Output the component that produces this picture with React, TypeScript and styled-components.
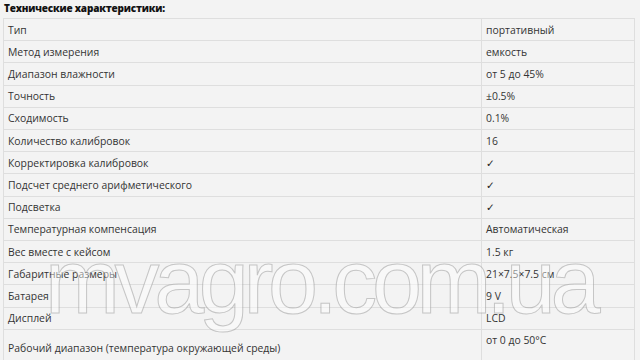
import styled, { createGlobalStyle } from 'styled-components';

const GlobalStyle = createGlobalStyle`
  html, body {
    margin: 0;
    padding: 0;
    background: #f3f3f3;
    overflow: hidden;
  }
  body {
    font-family: "Open Sans", "Noto Sans", sans-serif;
    color: #333;
  }
`;

interface Spec {
  name: string;
  value: string;
  tall?: boolean;
}

const specs: Spec[] = [
  { name: 'Тип', value: 'портативный' },
  { name: 'Метод измерения', value: 'емкость' },
  { name: 'Диапазон влажности', value: 'от 5 до 45%' },
  { name: 'Точность', value: '±0.5%' },
  { name: 'Сходимость', value: '0.1%' },
  { name: 'Количество калибровок', value: '16' },
  { name: 'Корректировка калибровок', value: '✓' },
  { name: 'Подсчет среднего арифметического', value: '✓' },
  { name: 'Подсветка', value: '✓' },
  { name: 'Температурная компенсация', value: 'Автоматическая' },
  { name: 'Вес вместе с кейсом', value: '1.5 кг' },
  { name: 'Габаритные размеры', value: '21×7.5×7.5 см' },
  { name: 'Батарея', value: '9 V' },
  { name: 'Дисплей', value: 'LCD' },
  { name: 'Рабочий диапазон (температура окружающей среды)', value: 'от 0 до 50°C', tall: true },
];

const S = {
  Page: styled.div`
    position: relative;
    padding: 0 5px 0 3px;
  `,
  Title: styled.div`
    font-size: 10px;
    font-weight: 800;
    letter-spacing: -0.2px;
    line-height: 16px;
    color: #111;
    padding-left: 1px;
    margin-bottom: 2px;
  `,
  Table: styled.table`
    width: 100%;
    border-collapse: collapse;
    font-size: 10.4px;
    line-height: 16.2px;
  `,
  Row: styled.tr`
    height: 22.2px;
  `,
  Cell: styled.td<{ $first?: boolean }>`
    border: 1px solid #dedede;
    padding: 2.5px 4px;
    vertical-align: middle;
    width: ${({ $first }) => ($first ? '469px' : 'auto')};
  `,
  Check: styled.span`
    display: inline-block;
    font-family: "DejaVu Sans", sans-serif;
    font-size: 10.5px;
    line-height: 10px;
    vertical-align: baseline;
    color: #222;
  `,
  Watermark: styled.div`
    position: absolute;
    left: 45px;
    top: 237px;
    font-family: "Liberation Sans", Arial, sans-serif;
    font-size: 90px;
    line-height: 90px;
    letter-spacing: -5.4px;
    white-space: nowrap;
    color: rgba(255, 255, 255, 0.45);
    -webkit-text-stroke: 1px rgba(150, 150, 150, 0.5);
    pointer-events: none;
  `,
};

export default function App() {
  return (
    <>
      <GlobalStyle />
      <S.Page>
        <S.Title>Технические характеристики:</S.Title>
        <S.Table>
          <tbody>
            {specs.map((s) => (
              <S.Row key={s.name}>
                <S.Cell $first>{s.name}</S.Cell>
                <S.Cell>
                  {s.value === '✓' ? <S.Check>✓</S.Check> : s.value}
                  {s.tall && (
                    <>
                      <br />
                      &nbsp;
                    </>
                  )}
                </S.Cell>
              </S.Row>
            ))}
          </tbody>
        </S.Table>
        <S.Watermark>mvagro.com.ua</S.Watermark>
      </S.Page>
    </>
  );
}
